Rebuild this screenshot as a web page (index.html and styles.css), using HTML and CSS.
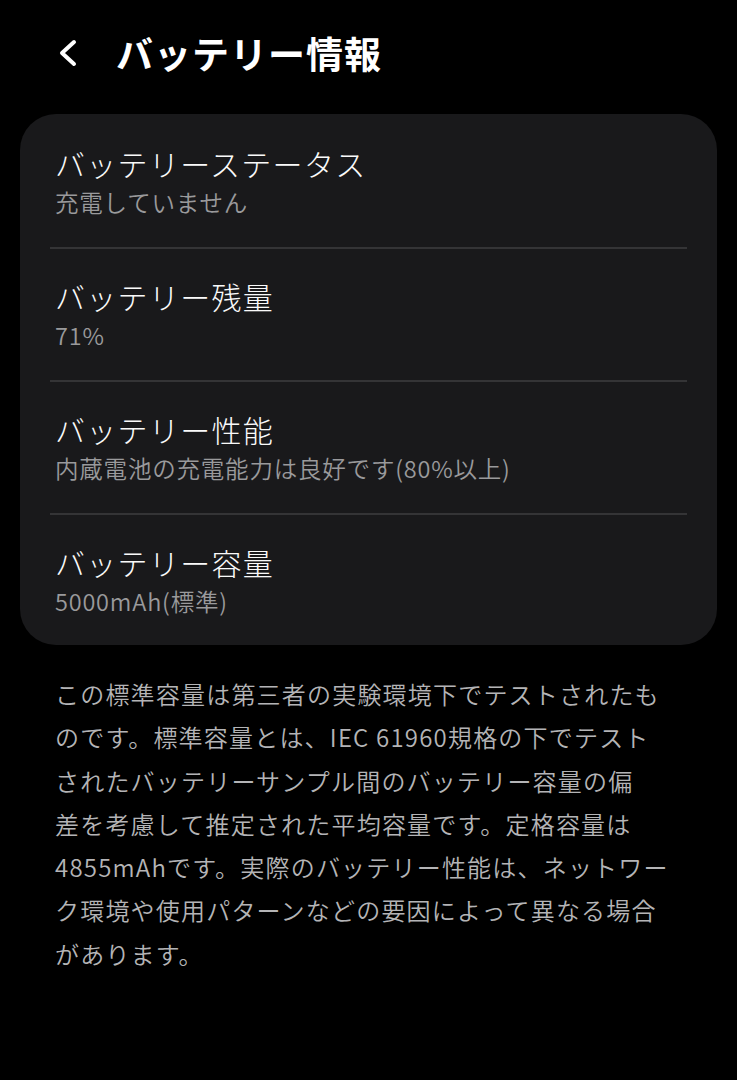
FILE: index.html
```html
<!DOCTYPE html>
<html lang="ja">
<head>
<meta charset="utf-8">
<link rel="stylesheet" href="styles.css">
</head>
<body>
<header class="header">
  <span class="back">
    <svg width="24" height="28" viewBox="0 0 24 28"><path d="M18 3 L6 14 L18 25" fill="none" stroke="#fff" stroke-width="4" stroke-linecap="round" stroke-linejoin="round"/></svg>
  </span>
  <h1 class="title">バッテリー情報</h1>
</header>
<section class="card">
  <div class="row">
    <div class="row-title">バッテリーステータス</div>
    <div class="row-sub">充電していません</div>
  </div>
  <div class="row">
    <div class="row-title">バッテリー残量</div>
    <div class="row-sub">71%</div>
  </div>
  <div class="row">
    <div class="row-title">バッテリー性能</div>
    <div class="row-sub">内蔵電池の充電能力は良好です(80%以上)</div>
  </div>
  <div class="row">
    <div class="row-title">バッテリー容量</div>
    <div class="row-sub">5000mAh(標準)</div>
  </div>
</section>
<p class="note">この標準容量は第三者の実験環境下でテストされたも<br>のです。標準容量とは、IEC 61960規格の下でテスト<br>されたバッテリーサンプル間のバッテリー容量の偏<br>差を考慮して推定された平均容量です。定格容量は<br>4855mAhです。実際のバッテリー性能は、ネットワー<br>ク環境や使用パターンなどの要因によって異なる場合<br>があります。</p>
</body>
</html>
```
FILE: styles.css
```css
html, body {
  margin: 0;
  padding: 0;
  background: #000;
}
body {
  font-family: "Noto Sans CJK JP", "Noto Sans", sans-serif;
  color: #fff;
  width: 737px;
  min-height: 1080px;
}
.header {
  height: 114px;
  display: flex;
  align-items: center;
  padding: 0 0 8px 56px;
  box-sizing: border-box;
}
.back {
  width: 24px;
  height: 28px;
  display: flex;
}
.title {
  margin: 0 0 0 36px;
  font-size: 37px;
  font-weight: 700;
  letter-spacing: 1px;
  line-height: 42px;
}
.card {
  margin: 0 20px;
  background: #19191b;
  border-radius: 36px;
  padding: 2px 30px 0;
}
.row {
  padding: 29px 5px 30px;
  border-bottom: 2px solid #343436;
}
.row:last-child {
  border-bottom: none;
  padding-bottom: 29px;
}
.row-title {
  font-size: 30px;
  font-weight: 300;
  line-height: 36px;
  letter-spacing: 1.3px;
  color: #fafafa;
}
.row-sub {
  margin-top: 6px;
  font-size: 23.5px;
  font-weight: 350;
  line-height: 30px;
  letter-spacing: 0.8px;
  color: #9a9a9c;
}
.note {
  margin: 27px 0 0 0;
  padding: 0 10px 0 55px;
  font-size: 24px;
  font-weight: 350;
  line-height: 43.3px;
  letter-spacing: 1.2px;
  color: #b4b4b6;
}
```
